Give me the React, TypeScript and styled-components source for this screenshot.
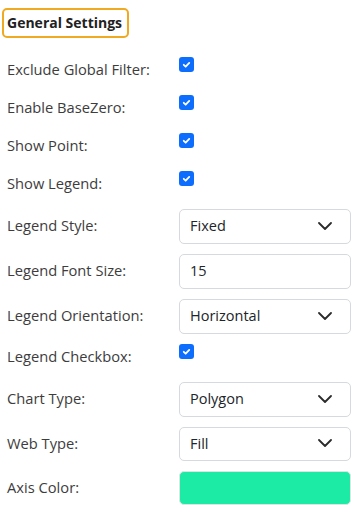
import React from "react";
import styled, { createGlobalStyle } from "styled-components";

const GlobalStyle = createGlobalStyle`
  html, body {
    margin: 0;
    padding: 0;
    background: #ffffff;
  }
  body {
    font-family: "Open Sans", "Lato", sans-serif;
    color: #333333;
  }
`;

const Page = styled.div`
  width: 360px;
  padding: 8px 0 0 2px;
  box-sizing: border-box;
`;

const Heading = styled.div`
  display: inline-block;
  border: 2px solid #efaa22;
  border-radius: 5px;
  padding: 3px 5px 4px 3px;
  font-size: 14px;
  font-weight: 700;
  line-height: 19px;
  color: #222222;
`;

const Form = styled.div`
  display: flex;
  flex-direction: column;
  gap: 10px;
  padding: 19px 9px 0 5px;
`;

const Row = styled.div<{ $check?: boolean }>`
  display: grid;
  grid-template-columns: 172px 172px;
  align-items: ${(p) => (p.$check ? "start" : "center")};
  height: ${(p) => (p.$check ? "28px" : "auto")};
`;

const Label = styled.div`
  font-size: 14.7px;
  line-height: 24px;
  color: #3d3d3d;
  padding-bottom: 3px;
`;

const Check = styled.div`
  width: 15px;
  height: 15px;
  border-radius: 3px;
  background: #0d6efd;
  display: flex;
  align-items: center;
  justify-content: center;
`;

const Field = styled.div<{ $h?: number }>`
  box-sizing: border-box;
  height: ${(p) => p.$h ?? 35}px;
  border: 1px solid #d6d9dd;
  border-radius: 5px;
  display: flex;
  align-items: center;
  justify-content: space-between;
  padding: 0 18px 2px 10px;
  font-size: 14.5px;
  color: #212529;
`;

const Swatch = styled.div<{ $color: string }>`
  box-sizing: border-box;
  height: 34px;
  border: 1px solid #e3e3e3;
  border-radius: 5px;
  background: ${(p) => p.$color};
`;

const Tick = () => (
  <svg width="11" height="11" viewBox="0 0 20 20">
    <path d="M5 10.5l3.5 3.5l6.5-7" fill="none" stroke="#fff" strokeWidth="3.2" strokeLinecap="round" strokeLinejoin="round" />
  </svg>
);

const Chevron = () => (
  <svg width="14" height="8" viewBox="0 0 14 8">
    <path d="M1 1l6 6l6-6" fill="none" stroke="#2b2b2b" strokeWidth="1.8" strokeLinecap="round" strokeLinejoin="round" />
  </svg>
);

const CheckRow = ({ label }: { label: string }) => (
  <Row $check>
    <Label>{label}</Label>
    <Check>
      <Tick />
    </Check>
  </Row>
);

const SelectRow = ({ label, value, h }: { label: string; value: string; h?: number }) => (
  <Row>
    <Label>{label}</Label>
    <Field $h={h}>
      <span>{value}</span>
      <Chevron />
    </Field>
  </Row>
);

export default function App() {
  return (
    <Page>
      <GlobalStyle />
      <Heading>General Settings</Heading>
      <Form>
        <CheckRow label="Exclude Global Filter:" />
        <CheckRow label="Enable BaseZero:" />
        <CheckRow label="Show Point:" />
        <CheckRow label="Show Legend:" />
        <SelectRow label="Legend Style:" value="Fixed" />
        <Row>
          <Label>Legend Font Size:</Label>
          <Field>
            <span>15</span>
          </Field>
        </Row>
        <SelectRow label="Legend Orientation:" value="Horizontal" />
        <CheckRow label="Legend Checkbox:" />
        <SelectRow label="Chart Type:" value="Polygon" />
        <SelectRow label="Web Type:" value="Fill" h={34} />
        <Row>
          <Label>Axis Color:</Label>
          <Swatch $color="#1beba5" />
        </Row>
      </Form>
    </Page>
  );
}
